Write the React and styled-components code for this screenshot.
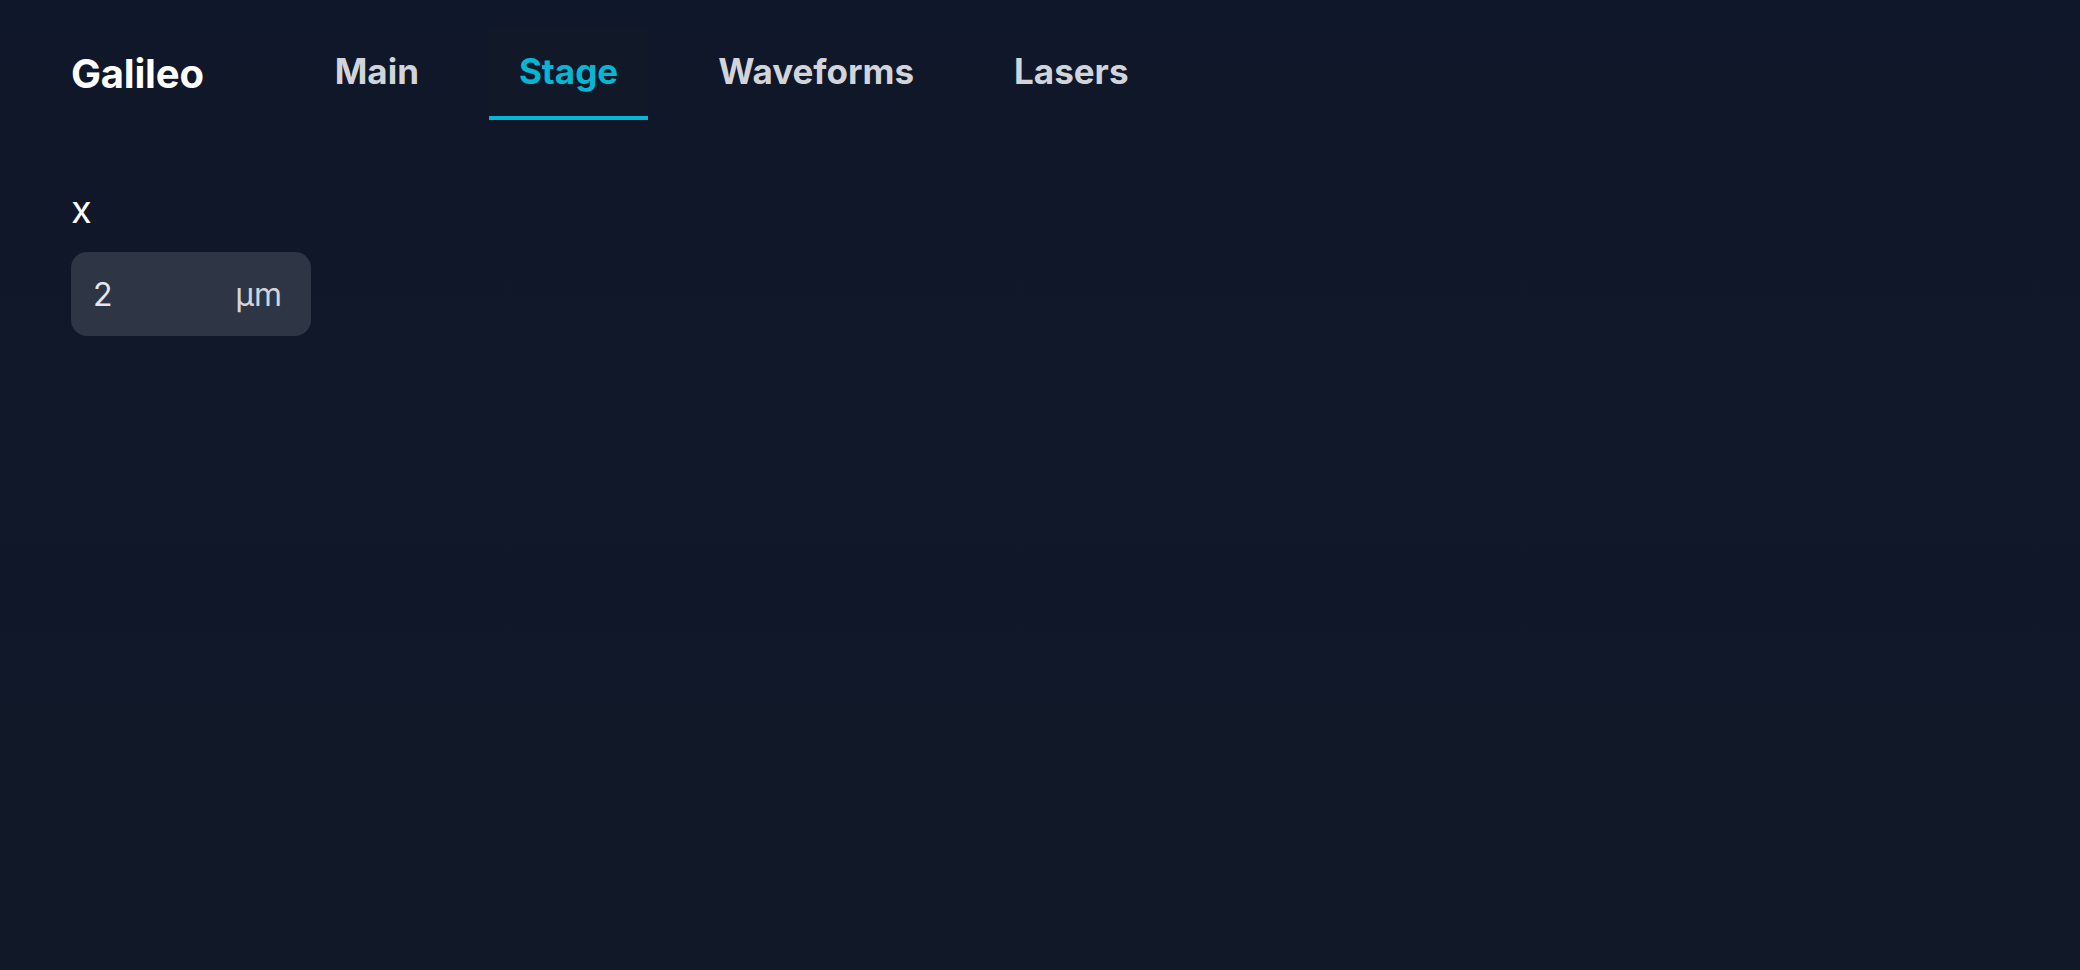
import React from "react";
import styled, { createGlobalStyle } from "styled-components";

const GlobalStyle = createGlobalStyle`
  html, body { margin: 0; padding: 0; }
  body {
    font-family: Inter, "Noto Sans", "Liberation Sans", sans-serif;
    background: #0f172a;
  }
  * { box-sizing: border-box; }
`;

const Page = styled.div`
  min-height: 100vh;
  background: linear-gradient(180deg, #0f172a 0%, #111827 100%);
  color: #ffffff;
`;

const Header = styled.header`
  display: flex;
  align-items: center;
  padding: 27px 71px 0;
`;

const Logo = styled.div`
  font-size: 40px;
  font-weight: 700;
  color: #ffffff;
  letter-spacing: -0.2px;
  margin-right: 101px;
`;

const Nav = styled.nav`
  display: flex;
  gap: 40px;
`;

const Tab = styled.button`
  font-family: inherit;
  font-size: 35px;
  font-weight: 700;
  line-height: 43px;
  padding: 23px 30px;
  border: none;
  border-bottom: 4px solid ${(p) => (p.$active ? "#06b6d4" : "transparent")};
  background: ${(p) => (p.$active ? "#111827" : "transparent")};
  color: ${(p) => (p.$active ? "#06b6d4" : "#d1d5db")};
  cursor: pointer;
`;

const Content = styled.main`
  padding: 66px 71px 0;
`;

const Field = styled.div`
  display: flex;
  flex-direction: column;
  gap: 20px;
`;

const Label = styled.label`
  font-size: 38px;
  font-weight: 400;
  color: #ffffff;
  line-height: 46px;
`;

const InputBox = styled.div`
  display: flex;
  align-items: center;
  width: 240px;
  height: 84px;
  border-radius: 16px;
  background: #2e3646;
  padding: 0 29px 0 22px;
`;

const NumberInput = styled.input`
  flex: 1;
  min-width: 0;
  border: none;
  outline: none;
  background: transparent;
  font-family: inherit;
  font-size: 32px;
  color: #e5e7eb;
  padding: 0;
`;

const Unit = styled.span`
  font-size: 32px;
  color: #d1d5db;
`;

const tabs = ["Main", "Stage", "Waveforms", "Lasers"];

export default function App() {
  return (
    <Page>
      <GlobalStyle />
      <Header>
        <Logo>Galileo</Logo>
        <Nav>
          {tabs.map((t) => (
            <Tab key={t} $active={t === "Stage"}>
              {t}
            </Tab>
          ))}
        </Nav>
      </Header>
      <Content>
        <Field>
          <Label>x</Label>
          <InputBox>
            <NumberInput type="text" defaultValue="2" />
            <Unit>µm</Unit>
          </InputBox>
        </Field>
      </Content>
    </Page>
  );
}
